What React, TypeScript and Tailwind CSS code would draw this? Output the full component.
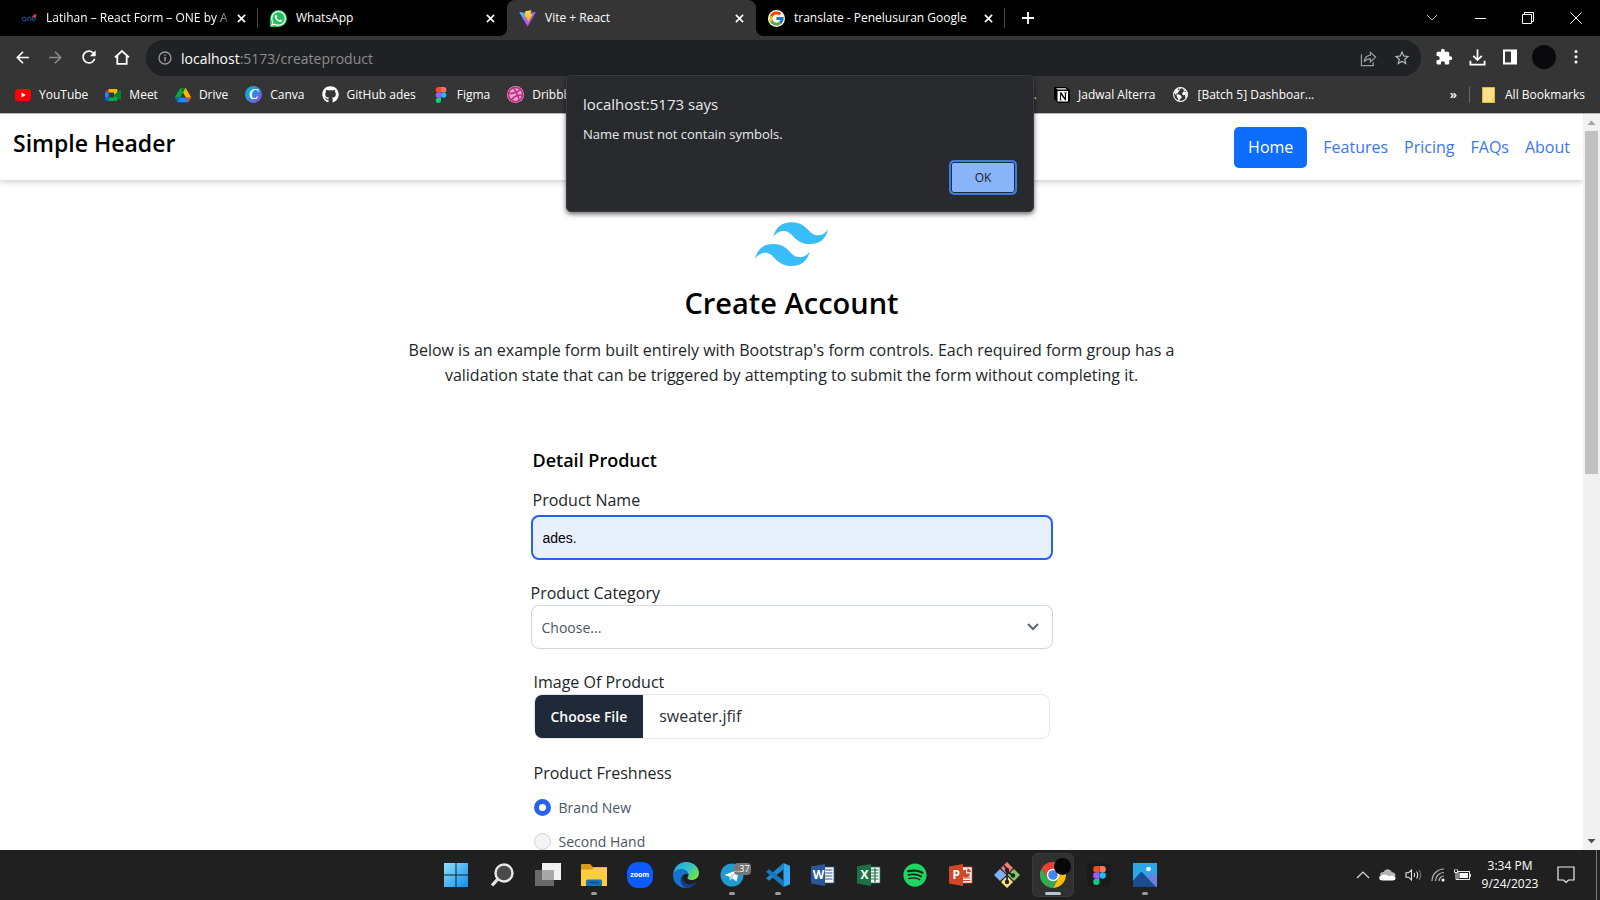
import { useEffect, useRef, type ReactNode } from "react";
import { FaGithub, FaSpotify, FaWhatsapp } from "react-icons/fa";
import { FcGoogle } from "react-icons/fc";
import { MdArrowBack, MdArrowForward, MdRefresh, MdExtension, MdStarBorder } from "react-icons/md";
import { IoEarth } from "react-icons/io5";
import { TbBrandDribbble } from "react-icons/tb";

/* ---------- brand marks ---------- */

const OneLogo = () => (
  <svg viewBox="0 0 16 16" className="size-4" fill="none">
    <circle cx="3.2" cy="9" r="1.9" stroke="#1f3f77" strokeWidth="1.3" />
    <path d="M7 11V8.600q0-1.500 1.500-1.500t1.500 1.500V11" stroke="#1f3f77" strokeWidth="1.200" />
    <path d="M11.300 9h3.400a1.700 1.900 0 1 0-.6 1.600" stroke="#1f3f77" strokeWidth="1.100" />
    <path d="M10.500 6.500 15.500 3.500 14.800 7.500z" fill="#e0483e" />
  </svg>
);

const WhatsAppLogo = () => (
  <span className="flex size-[17px] items-center justify-center rounded-full rounded-bl-[3px] bg-[#22c15e] text-white">
    <FaWhatsapp className="size-[17px]" />
  </span>
);

const ViteLogo = () => (
  <svg viewBox="0 0 410 404" className="size-[17px]">
    <defs>
      <linearGradient id="vite-a" x1="6" y1="33" x2="235" y2="344" gradientUnits="userSpaceOnUse">
        <stop stopColor="#41D1FF" />
        <stop offset="1" stopColor="#BD34FE" />
      </linearGradient>
      <linearGradient id="vite-b" x1="194" y1="9" x2="236" y2="293" gradientUnits="userSpaceOnUse">
        <stop stopColor="#FFEA83" />
        <stop offset=".083" stopColor="#FFDD35" />
        <stop offset="1" stopColor="#FFA800" />
      </linearGradient>
    </defs>
    <path fill="url(#vite-a)" d="M399.641 59.525L215.643 388.545C211.844 395.338 202.084 395.378 198.228 388.618L10.582 59.556C6.381 52.190 12.680 43.267 21.028 44.759L205.223 77.682C206.398 77.892 207.601 77.890 208.776 77.676L389.119 44.806C397.439 43.289 403.768 52.143 399.641 59.525Z" />
    <path fill="url(#vite-b)" d="M292.965 1.574L156.801 28.255C154.563 28.694 152.906 30.590 152.771 32.866L144.395 174.330C144.198 177.662 147.258 180.248 150.510 179.498L188.420 170.749C191.967 169.931 195.172 173.055 194.443 176.622L183.180 231.775C182.422 235.487 185.907 238.661 189.532 237.560L212.947 230.446C216.577 229.344 220.065 232.527 219.297 236.242L201.398 322.875C200.278 328.294 207.486 331.249 210.492 326.603L212.500 323.500L323.454 102.072C325.312 98.365 322.108 94.137 318.036 94.923L279.014 102.454C275.347 103.161 272.227 99.746 273.262 96.158L298.731 7.867C299.767 4.273 296.636 .855 292.965 1.574Z" />
  </svg>
);

const YouTubeLogo = () => (
  <svg viewBox="0 0 16 16" className="size-4">
    <rect y="2" width="16" height="12" rx="3" fill="#f00" />
    <path d="M6.500 5.500v5L10.800 8z" fill="#fff" />
  </svg>
);

const MeetLogo = () => (
  <svg viewBox="0 0 16 16" className="size-4">
    <path d="M0 5.500 3.700 2v3.500z" fill="#ea4335" />
    <path d="M0 5.500h3.700v5H0z" fill="#2684fc" />
    <path d="M0 10.500h3.700V14H1.200Q0 14 0 12.800z" fill="#0066da" />
    <path d="M3.700 2h7.500q1.300 0 1.300 1.300V6L9 8V5.500H3.700z" fill="#ffba00" />
    <path d="M3.700 10.500H9V8l3.500 2.200v2.500q0 1.300-1.300 1.300H3.700z" fill="#00ac47" />
    <path d="M9 8l3.500-3 2.600-2q.9-.5.9.5v9q0 1-.9.500l-2.600-2z" fill="#00832d" />
  </svg>
);

const DriveLogo = () => (
  <svg viewBox="0 0 87.300 78" className="size-4">
    <path d="m6.600 66.850 3.850 6.650c.8 1.400 1.950 2.500 3.300 3.300l13.750-23.800h-27.500c0 1.550.4 3.100 1.200 4.500z" fill="#0066da" />
    <path d="m43.650 25-13.750-23.800c-1.350.8-2.500 1.900-3.300 3.300l-25.400 44a9.060 9.060 0 0 0 -1.200 4.500h27.500z" fill="#00ac47" />
    <path d="m73.550 76.800c1.350-.8 2.500-1.900 3.300-3.300l1.600-2.750 7.650-13.250c.8-1.400 1.200-2.950 1.200-4.500h-27.500l5.850 11.500z" fill="#ea4335" />
    <path d="m43.650 25 13.750-23.800c-1.350-.8-2.900-1.200-4.500-1.200h-18.500c-1.600 0-3.150.45-4.500 1.200z" fill="#00832d" />
    <path d="m59.800 53h-32.300l-13.750 23.800c1.350.8 2.900 1.200 4.500 1.200h50.800c1.600 0 3.150-.45 4.500-1.200z" fill="#2684fc" />
    <path d="m73.400 26.500-12.700-22c-.8-1.400-1.950-2.500-3.300-3.300l-13.750 23.800 16.150 28h27.450c0-1.550-.4-3.100-1.200-4.500z" fill="#ffba00" />
  </svg>
);

const CanvaLogo = () => (
  <span className="flex size-[17px] items-center justify-center rounded-full bg-linear-to-br from-[#05b9c5] via-[#2d8be0] to-[#7d2ae8] font-['Liberation_Serif',serif] text-[14px] leading-4 font-bold text-white italic">
    C
  </span>
);

const FigmaMark = () => (
  <>
    <path fill="#1abcfe" d="M19 28.500a9.500 9.500 0 1 1 19 0 9.500 9.500 0 0 1-19 0z" />
    <path fill="#0acf83" d="M0 47.500A9.500 9.500 0 0 1 9.500 38H19v9.500a9.500 9.500 0 1 1-19 0z" />
    <path fill="#ff7262" d="M19 0v19h9.500a9.500 9.500 0 1 0 0-19H19z" />
    <path fill="#f24e1e" d="M0 9.500A9.500 9.500 0 0 0 9.500 19H19V0H9.500A9.500 9.500 0 0 0 0 9.500z" />
    <path fill="#a259ff" d="M0 28.500A9.500 9.500 0 0 0 9.500 38H19V19H9.500A9.500 9.500 0 0 0 0 28.500z" />
  </>
);

const DribbbleLogo = () => (
  <span className="flex size-[17px] items-center justify-center rounded-full bg-[#f7a1d4] text-[#b8307f]">
    <TbBrandDribbble className="size-[19px] shrink-0" />
  </span>
);

const NotionLogo = () => (
  <svg viewBox="0 0 16 16" className="size-4">
    <path d="M1 0h11l4 3v11q0 2-2 2H4L0 12V1q0-1 1-1z" fill="#000" />
    <path d="M2 1.200h9.500L13.200 2.500H3.600z" fill="#fff" />
    <rect x="3.500" y="4" width="10.500" height="10.500" fill="#fff" />
    <path d="M5.500 5.500h2l3.400 5.200V6.300L10 6v-.5h2.700V6l-.7.300v6.900h-1L7 7.700v4.700l1 .3v.5H5.400v-.5l.7-.3V6.300l-.6-.3z" fill="#000" />
  </svg>
);

const TailwindLogo = () => (
  <svg viewBox="0 0 54 33" className="h-[45px] w-[73px]">
    <path
      fill="#38bdf8"
      fillRule="evenodd"
      d="M27 0c-7.200 0-11.700 3.600-13.500 10.800 2.700-3.600 5.850-4.950 9.450-4.050 2.054.513 3.522 2.004 5.147 3.653C30.744 13.090 33.808 16.200 40.500 16.200c7.200 0 11.700-3.600 13.500-10.800-2.700 3.600-5.850 4.950-9.450 4.050-2.054-.513-3.522-2.004-5.147-3.653C36.756 3.110 33.692 0 27 0zM13.500 16.200C6.300 16.200 1.800 19.800 0 27c2.700-3.600 5.850-4.950 9.450-4.050 2.054.514 3.522 2.004 5.147 3.653C17.244 29.290 20.308 32.400 27 32.400c7.200 0 11.700-3.600 13.500-10.800-2.700 3.600-5.850 4.950-9.450 4.050-2.054-.513-3.522-2.004-5.147-3.653C23.256 19.310 20.192 16.200 13.500 16.200z"
    />
  </svg>
);

/* ---------- browser chrome ---------- */

const CloseGlyph = () => (
  <svg viewBox="0 0 10 10" className="size-[9px]" stroke="#fff" strokeWidth="1.800">
    <path d="M1 1l8 8M9 1L1 9" />
  </svg>
);

function Tab({ icon, title, active, divider, fade }: { icon: ReactNode; title: string; active?: boolean; divider?: boolean; fade?: boolean }) {
  return (
    <div className={`relative flex h-9 w-[249px] items-center pr-3 pl-3 ${active ? "rounded-t-lg bg-[#353535]" : ""}`}>
      {active && (
        <>
          <span className="absolute bottom-0 -left-2 size-2 bg-[radial-gradient(circle_at_0_0,#000_8px,#353535_8px)]" />
          <span className="absolute -right-2 bottom-0 size-2 bg-[radial-gradient(circle_at_100%_0,#000_8px,#353535_8px)]" />
        </>
      )}
      {icon}
      <span className={`ml-[9px] flex-1 text-[12px] whitespace-nowrap text-white ${fade ? "mask-r-from-90%" : ""}`}>{title}</span>
      <button aria-label={`Close ${title}`} className="flex w-3 items-center justify-end">
        <CloseGlyph />
      </button>
      {divider && <span className="absolute right-0 h-5 w-px bg-[#4a4a4a]" />}
    </div>
  );
}

function TabStrip() {
  return (
    <div className="flex h-9 items-center bg-black pl-[9px]">
      <Tab icon={<OneLogo />} title="Latihan – React Form – ONE by A" divider fade />
      <Tab icon={<WhatsAppLogo />} title="WhatsApp" />
      <Tab icon={<ViteLogo />} title="Vite + React" active />
      <Tab icon={<span className="rounded-full bg-white"><FcGoogle className="size-[17px]" /></span>} title="translate - Penelusuran Google" divider />
      <button aria-label="New tab" className="ml-[17px]">
        <svg viewBox="0 0 12 12" className="size-3" stroke="#fff" strokeWidth="1.800"><path d="M6 0v12M0 6h12" /></svg>
      </button>
      <div className="ml-auto flex h-8 items-center">
        <button aria-label="Search tabs" className="flex w-12 justify-center">
          <svg viewBox="0 0 12 8" className="h-2 w-3" fill="none" stroke="#bbb"><path d="M1 1l5 5 5-5" /></svg>
        </button>
        <button aria-label="Minimize" className="flex w-12 justify-center">
          <span className="h-px w-[11px] bg-white" />
        </button>
        <button aria-label="Restore" className="flex w-12 justify-center">
          <svg viewBox="0 0 12 12" className="size-3" fill="none" stroke="#fff"><path d="M.5 2.500h9v9h-9zM2.500 2.500v-2h9v9h-2" /></svg>
        </button>
        <button aria-label="Close window" className="flex w-12 justify-center">
          <svg viewBox="0 0 12 12" className="size-3" fill="none" stroke="#fff"><path d="M.5.500l11 11M11.500.500l-11 11" /></svg>
        </button>
      </div>
    </div>
  );
}

function Toolbar() {
  return (
    <div className="flex h-10 items-center bg-[#353535] pt-1 text-white">
      <div className="flex w-[146px] items-center gap-3.5 pb-0.5 pl-[13px]">
        <button aria-label="Back"><MdArrowBack className="size-[19px]" /></button>
        <button aria-label="Forward" className="text-[#8a8a8a]"><MdArrowForward className="size-[19px]" /></button>
        <button aria-label="Reload"><MdRefresh className="size-5" /></button>
        <button aria-label="Home">
          <svg viewBox="0 0 18 18" className="size-[18px]" fill="none" stroke="currentColor" strokeWidth="1.800"><path d="M2 9.300 9 3l7 6.300M4.300 8v7.800h9.400V8" /></svg>
        </button>
      </div>
      <div className="flex h-9 flex-1 items-center rounded-full bg-[#202124] pr-2.5 pl-3">
        <svg viewBox="0 0 14 14" className="size-3.5" fill="none" stroke="#9a9a9a" strokeWidth="1.300">
          <circle cx="7" cy="7" r="6" /><path d="M7 6v4.300M7 3.500v1.300" strokeWidth="1.500" />
        </svg>
        <div className="ml-[9px] flex-1 text-[14px] text-[#8d8d8d]"><span className="text-white">localhost</span>:5173/createproduct</div>
        <button aria-label="Share this page" className="mr-4">
          <svg viewBox="0 0 18 18" className="size-[17px]" fill="none" stroke="#9c9c9c" strokeWidth="1.300">
            <path d="M1.500 4.500v12h12.500v-3.500M4.500 12.500q.8-6.500 6.500-7V2.500l5.500 5-5.500 5V9.300q-4-.3-6.500 3.200z" />
          </svg>
        </button>
        <button aria-label="Bookmark this tab" className="text-[#b5b5b5]"><MdStarBorder className="size-[18px]" /></button>
      </div>
      <div className="flex w-[179px] items-center gap-4 pb-0.5 pl-3.5">
        <button aria-label="Extensions"><MdExtension className="size-[18px]" /></button>
        <button aria-label="Downloads">
          <svg viewBox="0 0 18 18" className="size-[17px]" fill="none" stroke="currentColor" strokeWidth="1.900"><path d="M9 .5v11M4.500 7.200 9 11.700l4.500-4.500M1.500 12.500V16.500h15v-4" /></svg>
        </button>
        <button aria-label="Side panel">
          <svg viewBox="0 0 16 16" className="size-4"><path fill="currentColor" fillRule="evenodd" d="M1 .5h14v15H1zM3 2.500v11h6v-11z" /></svg>
        </button>
        <button aria-label="Profile" className="-ml-0.5 size-6 shrink-0 rounded-full bg-[#0a0a0c]" />
        <button aria-label="Menu" className="ml-0.5">
          <svg viewBox="0 0 4 16" className="h-4 w-1" fill="#fff"><circle cx="2" cy="2.500" r="1.500" /><circle cx="2" cy="7.800" r="1.500" /><circle cx="2" cy="13.100" r="1.500" /></svg>
        </button>
      </div>
    </div>
  );
}

const Bookmark = ({ icon, label }: { icon: ReactNode; label: string }) => (
  <a href="#" className="flex shrink-0 items-center gap-2">
    {icon}
    {label}
  </a>
);

function BookmarksBar() {
  return (
    <div className="flex h-[38px] items-center border-b border-[#b5b5b5] bg-[#353535] pr-[15px] pl-[15px] text-[12px] whitespace-nowrap text-white">
      <div className="flex w-[1022px] items-center gap-[17px]">
        <Bookmark icon={<YouTubeLogo />} label="YouTube" />
        <Bookmark icon={<MeetLogo />} label="Meet" />
        <Bookmark icon={<DriveLogo />} label="Drive" />
        <Bookmark icon={<CanvaLogo />} label="Canva" />
        <Bookmark icon={<FaGithub className="size-[17px]" />} label="GitHub ades" />
        <Bookmark icon={<svg viewBox="0 0 38 57" className="h-4 w-4"><FigmaMark /></svg>} label="Figma" />
        <Bookmark icon={<DribbbleLogo />} label="Dribbble" />
        <span className="ml-auto">...</span>
      </div>
      <div className="ml-[17px] flex items-center gap-[17px]">
        <Bookmark icon={<NotionLogo />} label="Jadwal Alterra" />
        <Bookmark icon={<IoEarth className="size-[17px]" />} label="[Batch 5] Dashboar..." />
      </div>
      <button aria-label="More bookmarks" className="ml-auto text-[13px] font-semibold">»</button>
      <span className="mx-3 h-4 w-px bg-[#666]" />
      <a href="#" className="flex items-center gap-2.5">
        <svg viewBox="0 0 13 16" className="h-4 w-[13px]"><path d="M.5.500h12v15H.5z" fill="#ffe08a" stroke="#e2b93f" /><path d="M10 15.500V11l2.500-1v5.500z" fill="#f3cd5a" /></svg>
        All Bookmarks
      </a>
    </div>
  );
}

function AlertDialog() {
  return (
    <div role="alertdialog" aria-labelledby="alert-title" aria-describedby="alert-text" className="absolute top-[75px] left-1/2 flex w-[468px] -translate-x-1/2 flex-col rounded-[5px] border border-[#3a3b3e] bg-[#292a2d] px-4 pt-4 pb-4 text-[#e8eaed] shadow-[0_2px_5px_rgba(0,0,0,0.6)]">
      <h2 id="alert-title" className="text-[15px] leading-6">localhost:5173 says</h2>
      <p id="alert-text" className="mt-2 text-[13px] leading-5">Name must not contain symbols.</p>
      <button className="mt-4 h-[35px] w-[68px] self-end rounded-[5px] border-2 border-[#3f7ae0] bg-[#8ab4f8] text-[12px] text-[#202124] inset-ring inset-ring-[#202c44]">OK</button>
    </div>
  );
}

/* ---------- page ---------- */

const navItems = ["Features", "Pricing", "FAQs", "About"];

function SiteHeader() {
  return (
    <header className="flex h-[66px] shrink-0 items-center justify-between bg-white pr-[13px] pl-[13px] shadow-[0_2px_6px_rgba(0,0,0,0.2)]">
      <h1 className="pb-2 text-[23px] leading-8 font-semibold text-black">Simple Header</h1>
      <nav className="flex items-center gap-4 text-[16px] text-[#3b76ef]">
        <a href="#" className="flex h-[41px] items-center rounded-[5px] bg-[#0d6efd] px-3.5 text-white">Home</a>
        {navItems.map((item) => (
          <a key={item} href="#">{item}</a>
        ))}
      </nav>
    </header>
  );
}

function FileField() {
  const ref = useRef<HTMLInputElement>(null);
  useEffect(() => {
    if (!ref.current) return;
    const transfer = new DataTransfer();
    transfer.items.add(new File(["x"], "sweater.jfif"));
    ref.current.files = transfer.files;
  }, []);
  return (
    <input
      ref={ref}
      id="image"
      type="file"
      className="h-[45px] w-full rounded-lg border border-gray-200 text-[16px] leading-[43px] text-[#2b2f36] file:mr-4 file:h-[43px] file:border-0 file:bg-[#1f2937] file:px-4 file:text-[14px] file:font-semibold file:text-white"
    />
  );
}

const radioStyle = "size-[17px] appearance-none rounded-full border border-gray-300 bg-gray-100 checked:border-[5px] checked:border-[#2563eb] checked:bg-white";

function ProductForm() {
  return (
    <form className="mx-auto mt-[58px] w-[522px] text-[16px] text-[#212529]">
      <h3 className="pl-0.5 text-[18px] leading-7 font-semibold text-black">Detail Product</h3>
      <div className="mt-3 flex flex-col">
        <label htmlFor="name" className="mb-px pl-0.5 leading-7">Product Name</label>
        <input id="name" defaultValue="ades." className="h-[45px] rounded-lg border-2 border-[#2563eb] bg-[#e8f0fe] px-2.5 font-['Liberation_Sans',sans-serif] text-[14px] text-black outline-none" />
      </div>
      <div className="mt-[21px] flex flex-col">
        <label htmlFor="category" className="leading-6">Product Category</label>
        <div className="grid items-center">
          <select id="category" className="col-start-1 row-start-1 h-11 appearance-none rounded-lg border border-gray-300 bg-white px-2.5 text-[14px] text-[#4b5563]">
            <option>Choose...</option>
          </select>
          <svg viewBox="0 0 12 8" className="pointer-events-none col-start-1 row-start-1 mr-3.5 h-2 w-3 justify-self-end" fill="none" stroke="#5f6773" strokeWidth="2"><path d="M1 1l5 5 5-5" /></svg>
        </div>
      </div>
      <div className="mt-[21px] flex flex-col pr-[3px] pl-[3px]">
        <label htmlFor="image" className="leading-6">Image Of Product</label>
        <FileField />
      </div>
      <fieldset className="mt-[22px] pl-[3px]">
        <legend className="leading-6">Product Freshness</legend>
        <div className="mt-[5px] flex flex-col text-[14px] text-[#4b5563]">
          <label className="flex h-[34px] items-center gap-2">
            <input type="radio" name="fresh" defaultChecked className={radioStyle} />
            Brand New
          </label>
          <label className="flex h-[34px] items-center gap-2">
            <input type="radio" name="fresh" className={radioStyle} />
            Second Hand
          </label>
        </div>
      </fieldset>
    </form>
  );
}

function Scrollbar() {
  return (
    <div aria-hidden="true" className="flex w-[17px] shrink-0 flex-col items-center bg-[#f1f1f1]">
      <svg viewBox="0 0 17 17" className="size-[17px] shrink-0"><path d="M4.500 11h8l-4-4.500z" fill="#a3a3a3" /></svg>
      <span className="h-[343px] w-[13px] bg-[#c1c1c1]" />
      <svg viewBox="0 0 17 17" className="mt-auto size-[17px] shrink-0"><path d="M4.500 6h8l-4 4.500z" fill="#505050" /></svg>
    </div>
  );
}

/* ---------- taskbar ---------- */

const officeIcon = (color: string, letter: string, detail: ReactNode) => (
  <span className="grid size-6 items-center">
    <svg viewBox="0 0 24 24" className="col-start-1 row-start-1 size-6">
      <path d="M12 4h11v16H12z" fill="#fff" stroke={color} strokeWidth=".8" />
      {detail}
      <path d="M0 3.500 14 1v22L0 20.500z" fill={color} />
    </svg>
    <span className="col-start-1 row-start-1 w-3.5 text-center text-[12px] leading-6 font-bold text-white">{letter}</span>
  </span>
);

const taskbarApps: { name: string; icon: ReactNode; running?: boolean; active?: boolean }[] = [
  {
    name: "Start",
    icon: (
      <svg viewBox="0 0 24 24" className="size-6">
        <linearGradient id="win" x2="1" y2="1"><stop stopColor="#8fe0fb" /><stop offset="1" stopColor="#0f8ef0" /></linearGradient>
        <path fill="url(#win)" d="M0 0h11.500v11.500H0zM12.500 0H24v11.500H12.500zM0 12.500h11.500V24H0zM12.500 12.500H24V24H12.500z" />
      </svg>
    ),
  },
  {
    name: "Search",
    icon: (
      <svg viewBox="0 0 24 24" className="size-6" fill="none" stroke="#e8e8e8">
        <circle cx="14" cy="10" r="8.500" fill="#4a4a4a" strokeWidth="2.400" /><path d="M7.800 16.200 2 22.500" strokeWidth="3.200" />
      </svg>
    ),
  },
  {
    name: "Task View",
    icon: (
      <svg viewBox="0 0 26 24" className="h-6 w-[26px]">
        <path d="M7 0h19v17H7z" fill="#f2f2f2" /><path d="M0 7h19v16H0z" fill="#6a6a6a" /><path d="M7 7h12v10H7z" fill="#a8a8a8" />
      </svg>
    ),
  },
  {
    name: "File Explorer",
    running: true,
    icon: (
      <svg viewBox="0 0 26 24" className="h-6 w-[26px]">
        <path d="M0 2q0-1 1-1h8l3 3h13q1 0 1 1v4H0z" fill="#d99a17" /><path d="M0 6.500h11l2-2h13V23H0z" fill="#ffcd3d" /><path d="M5 23v-5q0-1.500 1.500-1.500h13Q21 16.500 21 18v5z" fill="#1673b8" /><path d="M8 19.500h10" stroke="#0d4f86" strokeWidth="1.500" />
      </svg>
    ),
  },
  {
    name: "Zoom",
    icon: <span className="flex size-[26px] items-center justify-center rounded-[11px] bg-[#0b5cff] text-[7px] font-bold text-white">zoom</span>,
  },
  {
    name: "Edge",
    icon: (
      <svg viewBox="0 0 26 26" className="size-[26px]">
        <linearGradient id="edge-a" x2="1" y2=".6"><stop stopColor="#1fa6e6" /><stop offset=".6" stopColor="#35c2c5" /><stop offset="1" stopColor="#6be34b" /></linearGradient>
        <path d="M0 13C1 5 6 0 13 0c8 0 13 5.500 13 11 0 4.500-3.500 7-7.500 7-2.500 0-4.500-1-4-2.500.8-1 1-1.800 1-2.700C15.500 10 12 7.500 8.500 7.500 4.500 7.500 1 10 0 13z" fill="url(#edge-a)" />
        <path d="M0 13c.7-3.500 4-6 8.300-6 4 0 7.200 2.500 7.200 5.500-3-2-6.500 0-6.500 4 0 5 5 8 10 7C17 25.300 15 26 13 26 5.500 26 0 20.500 0 13z" fill="#1473cf" />
        <path d="M9.500 13.500c-1.500 4.500 2.500 9.500 8 8.500 2.700-.4 5-1.500 6.300-2.600C22 23.500 17.500 26 13 26 8 24 5.500 17 9.500 13.500z" fill="#123f86" />
      </svg>
    ),
  },
  {
    name: "Telegram",
    running: true,
    icon: (
      <span className="relative">
        <svg viewBox="0 0 24 24" className="size-6"><circle cx="12" cy="12" r="11.500" fill="#2499cf" /><path d="M4.500 12 19 6.200 16.600 18.500l-4.400-3.200-2.200 2.200-.3-3.800-5.200-1.700z" fill="#fff" /><path d="m9.700 13.700 6.800-5-4.300 6.600-2.200 2.200z" fill="#b9d8ea" /></svg>
        <span className="absolute top-0 left-3.5 rounded-[4px] bg-[#777] px-px text-[9px] leading-3 text-white">..37</span>
      </span>
    ),
  },
  {
    name: "Visual Studio Code",
    running: true,
    icon: (
      <svg viewBox="0 0 24 24" className="size-6">
        <path d="M17.500 0v6.500L3 17.800 0 15.300z" fill="#1c86cf" /><path d="M0 8.700 3 6.200l14.500 11.300V24z" fill="#1577bd" /><path d="M17.500 0 24 2.800v18.400L17.500 24z" fill="#32a9f2" />
      </svg>
    ),
  },
  { name: "Word", icon: officeIcon("#2b579a", "W", <path d="M14 7h7.500M14 10h7.500M14 13h7.500M14 16h7.500" stroke="#2b579a" strokeWidth="1.200" />) },
  { name: "Excel", icon: officeIcon("#1e7145", "X", <path d="M14 7h7.500M14 10h7.500M14 13h7.500M14 16h7.500M18 5v14" stroke="#1e7145" strokeWidth="1.200" />) },
  { name: "Spotify", icon: <FaSpotify className="size-6 text-[#1ed760]" /> },
  {
    name: "PowerPoint",
    icon: officeIcon("#d24726", "P", <><path d="M14 15h7.500M14 17.500h7.500" stroke="#d24726" strokeWidth="1.200" /><path d="M17 6.500v4h4a4 4 0 1 1-4-4z" fill="#d24726" /><path d="M18.200 5.500a4 4 0 0 1 3.800 3.800h-3.800z" fill="#d24726" /></>),
  },
  {
    name: "Git Bash",
    icon: (
      <svg viewBox="0 0 26 26" className="size-[26px]">
        <path d="M13 0l6 6-6 6.500L7 6z" fill="#f47c7c" /><path d="M20 7l6 6-6 6-6.500-6z" fill="#83c66b" /><path d="M13 14l6 6-6 6-6-6z" fill="#ffe27a" /><path d="M6 7l6.500 6L6 19l-6-6z" fill="#80b0f4" />
        <path d="M10 3.500 13 7v13M13 9l6 5" stroke="#222" strokeWidth="1.800" fill="none" /><circle cx="13" cy="20" r="2.200" fill="#222" /><circle cx="19" cy="13.500" r="2.200" fill="#222" /><circle cx="13" cy="8" r="2.200" fill="#222" />
      </svg>
    ),
  },
  {
    name: "Chrome",
    active: true,
    icon: (
      <span className="relative">
        <svg viewBox="0 0 26 26" className="size-[26px]">
          <path d="M13 7H24.500A13 13 0 0 1 13 26L18.200 16z" fill="#fbbc05" />
          <path d="M7.800 16 1.700 6.500A13 13 0 0 0 13 26l5.200-10z" fill="#34a853" />
          <path d="M13 7H24.500A13 13 0 0 0 1.700 6.500L7.800 16z" fill="#ea4335" />
          <circle cx="13" cy="13" r="6.200" fill="#fff" /><circle cx="13" cy="13" r="4.800" fill="#4285f4" />
        </svg>
        <span className="absolute -top-1 left-3.5 size-[17px] rounded-full bg-[#080808]" />
      </span>
    ),
  },
  {
    name: "Figma",
    icon: (
      <span className="flex size-6 items-center justify-center rounded-[5px] bg-[#1b1b1b]">
        <svg viewBox="0 0 38 57" className="h-[19px] w-[13px]"><FigmaMark /></svg>
      </span>
    ),
  },
  {
    name: "Photos",
    running: true,
    icon: (
      <svg viewBox="0 0 24 24" className="size-6">
        <path d="M0 0h24v24H0z" fill="#2aa7ea" /><path d="M12 16 19 9.500 24 14v10H12z" fill="#6c7fdc" /><path d="M0 17.500 8.500 8.500 23 24H0z" fill="#1b4c8c" /><circle cx="15.500" cy="6" r="2.300" fill="#fff" />
      </svg>
    ),
  },
];

function Taskbar() {
  return (
    <footer className="grid h-[50px] shrink-0 grid-cols-[1fr_736px_1fr] items-center bg-[#202020] text-white">
      <div className="col-start-2 flex pl-px">
        {taskbarApps.map((app) => (
          <button key={app.name} aria-label={app.name} className="grid h-[50px] w-[46px] place-items-center">
            <span className={`relative flex h-[42px] w-10 items-center justify-center rounded-[5px] ${app.active ? "bg-[#303030] ring-1 ring-[#3a3a3a]" : ""}`}>
              {app.icon}
              {app.running && <span className="absolute bottom-px h-[3px] w-1.5 rounded-full bg-[#9a9a9a]" />}
              {app.active && <span className="absolute bottom-px h-[3px] w-4 rounded-full bg-[#b5c7cf]" />}
            </span>
          </button>
        ))}
      </div>
      <div className="flex items-center justify-end gap-[9px] pr-[3px]">
        <svg viewBox="0 0 14 8" className="h-2 w-3.5" fill="none" stroke="#ddd" strokeWidth="1.200"><path d="M1 7l6-6 6 6" /></svg>
        <svg viewBox="0 0 17 12" className="h-3 w-[17px]"><path d="M1 6q0-3 3.500-3Q6 0 9 .3t4 3q3.500.2 3.500 4L8 9z" fill="#b5b5b5" /><path d="M3.500 11.500Q0 11.500.3 8.500T4.500 6q3-.6 5 1.300 3-1.600 5.500-.3 2 1 1.600 2.800-.3 1.700-2.600 1.700z" fill="#fff" /></svg>
        <svg viewBox="0 0 17 14" className="h-3.5 w-[17px]" fill="none" stroke="#e5e5e5" strokeWidth="1.100"><path d="M1 4.800h2.500L6.500 2v10L3.500 9.200H1zM9 5q1.500 2 0 4M11.500 3.500q2.500 3.500 0 7" /><path d="M14 2q3.500 5 0 10" stroke="#777" /></svg>
        <svg viewBox="0 0 14 14" className="size-3.5" fill="none" stroke="#b5b5b5" strokeWidth="1.200"><path d="M1 13A12 12 0 0 1 13 1M4.500 13A8.500 8.500 0 0 1 13 4.500M8 13a5 5 0 0 1 5-5" /><circle cx="12" cy="12" r="1.500" fill="#fff" stroke="none" /></svg>
        <svg viewBox="0 0 17 12" className="h-3 w-[17px]" fill="none" stroke="#e8e8e8"><rect x="4" y="2.500" width="11.500" height="8" /><path d="M5.500 4h8.500v5H5.500z" fill="#fff" stroke="none" /><path d="M16.500 5v3M.5 1v2.500h3V1M2 3.500v7h2M1 0v1M3 0v1" /></svg>
        <div className="flex w-[60px] flex-col items-center text-[12px] leading-[18px] whitespace-nowrap">
          <span>3:34 PM</span>
          <span>9/24/2023</span>
        </div>
        <svg viewBox="0 0 18 18" className="ml-2 size-[18px]" fill="none" stroke="#eee" strokeWidth="1.200"><path d="M1 1h16v13h-5.500L9 16.500 6.500 14H1z" /></svg>
        <span className="ml-3 h-[50px] w-px bg-[#777]" />
      </div>
    </footer>
  );
}

export default function App() {
  return (
    <div className="relative flex h-screen flex-col overflow-hidden bg-white font-['Open_Sans','Noto_Sans',sans-serif]">
      <TabStrip />
      <Toolbar />
      <BookmarksBar />
      <div className="flex min-h-0 flex-1">
        <div className="flex min-w-0 flex-1 flex-col overflow-hidden">
          <SiteHeader />
          <main className="min-h-0 flex-1 overflow-hidden pt-[42px]">
            <div className="mx-auto flex max-w-[768px] flex-col items-center text-center">
              <TailwindLogo />
              <h2 className="mt-3.5 text-[29px] leading-[44px] font-semibold text-black">Create Account</h2>
              <p className="mt-[13px] text-[16px] leading-[25px] text-[#212529]">
                Below is an example form built entirely with Bootstrap's form controls. Each required form group has a validation state that can be triggered by attempting to submit the form without completing it.
              </p>
            </div>
            <ProductForm />
          </main>
        </div>
        <Scrollbar />
      </div>
      <Taskbar />
      <AlertDialog />
    </div>
  );
}
